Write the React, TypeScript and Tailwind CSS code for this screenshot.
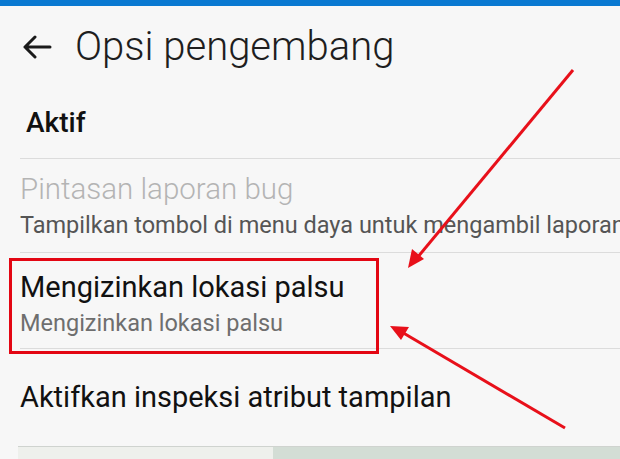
import React from "react";

export default function App() {
  return (
    <div
      className="relative w-[620px] h-[459px] overflow-hidden bg-[#f7f7f7]"
      style={{ fontFamily: "Roboto, 'Noto Sans', sans-serif" }}
    >
      <div className="h-[6px] bg-[#0a79d1]" />
      <div className="h-[82px] flex items-center pl-[22px]">
        <svg width="30" height="24" viewBox="0 0 30 24" className="shrink-0">
          <path d="M28 12H3M13 2L3 12l10 10" fill="none" stroke="#1a1a1a" strokeWidth="3" strokeLinecap="round" strokeLinejoin="round" />
        </svg>
        <span className="ml-[23px] text-[40px] font-light text-[#1e1e1e] leading-none">Opsi pengembang</span>
      </div>
      <div className="h-[70px] flex items-center pl-[26px] text-[28px] font-medium text-[#111]">Aktif</div>
      <div className="ml-[20px] border-t border-[#dcdcdc]">
        <div className="pt-[14px] pb-[14px] h-[93px]">
          <div className="text-[29.5px] leading-[32px] font-light text-[#b4b4b4]">Pintasan laporan bug</div>
          <div className="mt-[7px] text-[23.5px] leading-[26px] text-[#555] whitespace-nowrap overflow-hidden">
            Tampilkan tombol di menu daya untuk mengambil laporan bug
          </div>
        </div>
      </div>
      <div className="ml-[20px] border-t border-[#dcdcdc]">
        <div className="pt-[18px] h-[95px]">
          <div className="text-[29px] leading-[32px] text-[#111]">Mengizinkan lokasi palsu</div>
          <div className="mt-[7px] text-[23.5px] leading-[26px] text-[#6e6e6e]">Mengizinkan lokasi palsu</div>
        </div>
      </div>
      <div className="ml-[20px] border-t border-[#dcdcdc]">
        <div className="h-[97px] flex items-center text-[29px] text-[#111]">Aktifkan inspeksi atribut tampilan</div>
      </div>
      <div className="ml-[18px] h-[13px] flex border-t border-[#cfd3cf]">
        <div className="w-[255px] bg-[#eef0ec]" />
        <div className="flex-1 bg-[#d3ddd5]" />
      </div>

      <div className="absolute left-[9px] top-[258px] w-[370px] h-[96px] border-[3px] border-[#e30613]" />
      <svg className="absolute inset-0 pointer-events-none" width="620" height="459" viewBox="0 0 620 459">
        <line x1="573" y1="70" x2="417" y2="258" stroke="#e8101a" strokeWidth="3" />
        <polygon points="408,268 412,249 424,259" fill="#e8101a" />
        <line x1="565" y1="428" x2="400" y2="331" stroke="#e8101a" strokeWidth="3" />
        <polygon points="390,326 409,327 401,340" fill="#e8101a" />
      </svg>
    </div>
  );
}
